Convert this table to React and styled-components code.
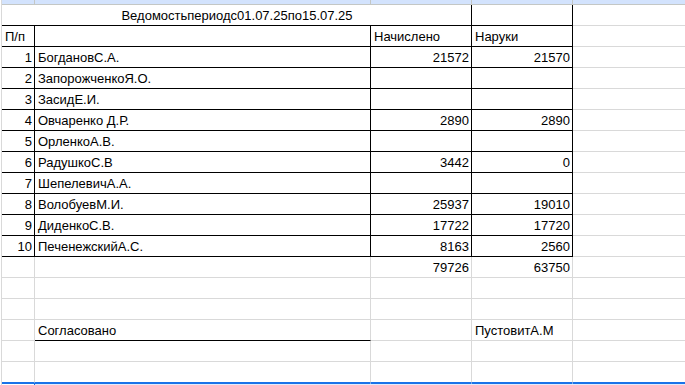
import React from "react";
import styled, { createGlobalStyle } from "styled-components";

const Global = createGlobalStyle`
  html, body { margin: 0; padding: 0; background: #fff; overflow: hidden; }
  body { font-family: "Liberation Sans", Arial, sans-serif; font-size: 13px; color: #000; }
`;

const COLS = "33px 336px 101px 101px 120px";
const GRID = "#d9d9d9";
const BLACK = "#000";

const Sheet = styled.div`
  width: 700px;
  margin-left: 1px;
  border-left: 1px solid ${GRID};
`;

const HeaderStrip = styled.div`
  display: grid;
  grid-template-columns: ${COLS};
  height: 5px;
  box-sizing: border-box;
  border-bottom: 1px solid #c4c7c5;
`;

const HeaderCell = styled.div`
  background: #d3e3fd;
  border-right: 1px solid #c4c7c5;
`;

const Row = styled.div`
  display: grid;
  grid-template-columns: ${COLS};
  height: 21px;
`;

const Cell = styled.div`
  box-sizing: border-box;
  height: 21px;
  line-height: 21px;
  padding: 0 2px 0 3px;
  white-space: nowrap;
  overflow: hidden;
  text-align: ${(p) => p.$align || "left"};
  grid-column: span ${(p) => p.$span || 1};
  border-right: 1px solid ${(p) => (p.$r ? BLACK : GRID)};
  border-bottom: 1px solid ${(p) => p.$bc || (p.$b ? BLACK : GRID)};
`;

const FooterStrip = styled.div`
  display: grid;
  grid-template-columns: ${COLS};
  height: 3px;
`;

const FooterCell = styled.div`
  background: ${(p) => (p.$first ? "#fff" : "#e3ecfc")};
  border-top: 1px solid #1a73e8;
  border-right: 1px solid ${(p) => (p.$first ? "#1a73e8" : "#e3ecfc")};
`;

const data = [
  [1, "БогдановС.А.", "21572", "21570"],
  [2, "ЗапорожченкоЯ.О.", "", ""],
  [3, "ЗасидЕ.И.", "", ""],
  [4, "Овчаренко Д.Р.", "2890", "2890"],
  [5, "ОрленкоА.В.", "", ""],
  [6, "РадушкоС.В", "3442", "0"],
  [7, "ШепелевичА.А.", "", ""],
  [8, "ВолобуевМ.И.", "25937", "19010"],
  [9, "ДиденкоС.В.", "17722", "17720"],
  [10, "ПеченежскийА.С.", "8163", "2560"],
];

const EmptyRow = ({ bc }) => (
  <Row>
    {[0, 1, 2, 3, 4].map((i) => (
      <Cell key={i} $bc={bc} />
    ))}
  </Row>
);

export default function App() {
  return (
    <>
      <Global />
      <Sheet>
        <HeaderStrip>
          {[0, 1, 2, 3, 4].map((i) => (
            <HeaderCell key={i} />
          ))}
        </HeaderStrip>

        <Row>
          <Cell $span={3} $r $b $align="center">
            Ведомостьпериодс01.07.25по15.07.25
          </Cell>
          <Cell $r $b />
          <Cell />
        </Row>

        <Row>
          <Cell $r $b>П/п</Cell>
          <Cell $r $b />
          <Cell $r $b>Начислено</Cell>
          <Cell $r $b>Наруки</Cell>
          <Cell />
        </Row>

        {data.map(([n, name, a, b]) => (
          <Row key={n}>
            <Cell $r $b $align="right">{n}</Cell>
            <Cell $r $b>{name}</Cell>
            <Cell $r $b $align="right">{a}</Cell>
            <Cell $r $b $align="right">{b}</Cell>
            <Cell />
          </Row>
        ))}

        <Row>
          <Cell />
          <Cell />
          <Cell $align="right">79726</Cell>
          <Cell $align="right">63750</Cell>
          <Cell />
        </Row>

        <EmptyRow />
        <EmptyRow />

        <Row>
          <Cell />
          <Cell $b>Согласовано</Cell>
          <Cell />
          <Cell>ПустовитА.М</Cell>
          <Cell />
        </Row>

        <EmptyRow />
        <EmptyRow bc="#1a73e8" />

        <FooterStrip>
          {[0, 1, 2, 3, 4].map((i) => (
            <FooterCell key={i} $first={i === 0} />
          ))}
        </FooterStrip>
      </Sheet>
    </>
  );
}
